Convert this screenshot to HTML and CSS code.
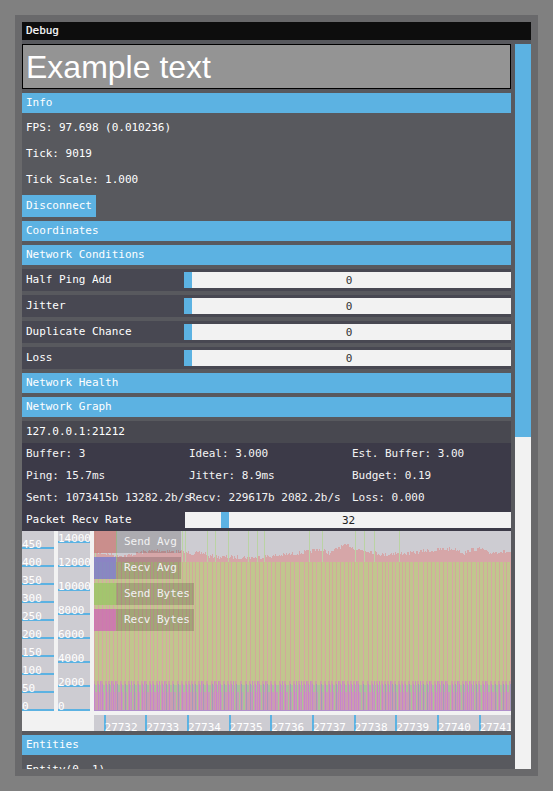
FILE: index.html
```html
<!DOCTYPE html>
<html lang="en">
<head>
<meta charset="utf-8">
<title>Debug</title>
<link rel="stylesheet" href="styles.css">
</head>
<body>
<main class="window">
  <header class="title">Debug</header>
  <div class="body">
    <div class="content">
      <div class="textbox">Example text</div>
      <div class="section">Info</div>
      <div class="line">FPS: 97.698 (0.010236)</div>
      <div class="line">Tick: 9019</div>
      <div class="line">Tick Scale: 1.000</div>
      <button class="button">Disconnect</button>
      <div class="section">Coordinates</div>
      <div class="section">Network Conditions</div>
      <div class="field"><span class="name">Half Ping Add</span><div class="slider"><i class="thumb"></i><span class="value">0</span></div></div>
      <div class="field"><span class="name">Jitter</span><div class="slider"><i class="thumb"></i><span class="value">0</span></div></div>
      <div class="field"><span class="name">Duplicate Chance</span><div class="slider"><i class="thumb"></i><span class="value">0</span></div></div>
      <div class="field"><span class="name">Loss</span><div class="slider"><i class="thumb"></i><span class="value">0</span></div></div>
      <div class="section">Network Health</div>
      <div class="section">Network Graph</div>
      <div class="connection">
        <div class="address">127.0.0.1:21212</div>
        <div class="stats">
          <span>Buffer: 3</span><span>Ideal: 3.000</span><span>Est. Buffer: 3.00</span>
          <span>Ping: 15.7ms</span><span>Jitter: 8.9ms</span><span>Budget: 0.19</span>
          <span>Sent: 1073415b 13282.2b/s</span><span>Recv: 229617b 2082.2b/s</span><span>Loss: 0.000</span>
        </div>
        <div class="field rate"><span class="name">Packet Recv Rate</span><div class="slider"><i class="thumb"></i><span class="value">32</span></div></div>
        <div class="graph">
          <div class="axis axis-packets">
            <span>450</span><span>400</span><span>350</span><span>300</span><span>250</span><span>200</span><span>150</span><span>100</span><span>50</span><span>0</span>
          </div>
          <div class="axis axis-bytes">
            <span>14000</span><span>12000</span><span>10000</span><span>8000</span><span>6000</span><span>4000</span><span>2000</span><span>0</span>
          </div>
          <div class="plot">
            <svg id="chart" width="417" height="180" viewBox="0 0 417 180" shape-rendering="crispEdges"></svg>
            <div class="legend">
              <div class="key"><i class="swatch red"></i><span>Send Avg</span></div>
              <div class="key"><i class="swatch blue"></i><span>Recv Avg</span></div>
              <div class="key"><i class="swatch green"></i><span>Send Bytes</span></div>
              <div class="key"><i class="swatch pink"></i><span>Recv Bytes</span></div>
            </div>
          </div>
          <div class="axis-time">
            <span>27732</span><span>27733</span><span>27734</span><span>27735</span><span>27736</span><span>27737</span><span>27738</span><span>27739</span><span>27740</span><span>27741</span>
          </div>
        </div>
      </div>
      <div class="section">Entities</div>
      <div class="line">Entity(0, 1)</div>
    </div>
    <div class="scrollbar"><div class="grip"></div></div>
  </div>
</main>
<script src="chart.js"></script>
</body>
</html>
```
FILE: styles.css
```css
* { box-sizing: border-box; }

body {
  margin: 0;
  height: 791px;
  padding: 15px;
  overflow: hidden;
  background: #808080;
  color: #fff;
  font: 11px/20px "DejaVu Sans Mono", "Liberation Mono", monospace;
  letter-spacing: -0.03px;
}

.window {
  display: flex;
  flex-direction: column;
  gap: 4px;
  width: 523px;
  height: 761px;
  border: 7px solid #69696b;
  background: #58595e;
}

.title {
  flex: none;
  height: 18px;
  padding-left: 4px;
  background: #0d0d0d;
  line-height: 18px;
  -webkit-text-stroke: 0.2px #fff;
}

.body {
  display: flex;
  flex: 1;
  gap: 4px;
  min-height: 0;
}

.content {
  display: flex;
  flex-direction: column;
  gap: 4px;
  width: 489px;
  overflow: hidden;
}

.content > * { flex: none; }

.textbox {
  height: 45px;
  padding-left: 3px;
  border: 1px solid #000;
  background: #949494;
  font: 32px/45px "Liberation Sans", Arial, sans-serif;
  letter-spacing: 0;
}

.section {
  height: 20px;
  padding-left: 4px;
  background: #5cb2e2;
  line-height: 19px;
}

.line, .address {
  height: 22px;
  padding-left: 4px;
  line-height: 21px;
}

.button {
  align-self: flex-start;
  width: 74px;
  height: 22px;
  padding: 0 0 1px 4px;
  border: 0;
  background: #5cb2e2;
  color: #fff;
  font: inherit;
  letter-spacing: inherit;
  line-height: 20px;
  text-align: left;
}

.field {
  display: flex;
  height: 22px;
  padding: 3px 0;
  background: #484852;
}

.name {
  width: 162px;
  padding-left: 4px;
  line-height: 15px;
}

.slider {
  position: relative;
  flex: 1;
  height: 16px;
  background: #f2f2f2;
  color: #333;
  text-align: center;
}

.thumb {
  position: absolute;
  left: 0;
  top: 0;
  width: 8px;
  height: 16px;
  background: #5cb2e2;
}

.value {
  display: block;
  padding-left: 3px;
  line-height: 17px;
}

.rate { background: transparent; }
.rate .name { width: 163px; line-height: 15px; }
.rate .thumb { left: 36px; }
.rate .value { padding-left: 1px; color: #222; }

.connection { background: #3c3a48; }
.address { background: #484850; }

.stats {
  display: grid;
  grid-template-columns: repeat(3, 163px);
  grid-auto-rows: 22px;
  line-height: 21px;
  white-space: nowrap;
}

.stats span { padding-left: 4px; color: #f4f4f4; }

.graph {
  display: grid;
  grid-template-columns: 32px 32px 417px;
  grid-template-rows: 180px 16px;
  gap: 4px;
  height: 200px;
  background: #f2f2f2;
}

.axis {
  display: flex;
  flex-direction: column;
  justify-content: flex-end;
  background: #cdccd2;
}

.axis span {
  flex: none;
  border-bottom: 2px solid #5cb2e2;
  height: 18px;
  line-height: 27px;
}

/* The top interval is only partly inside the plotted range. */
.axis-bytes span { height: 24px; line-height: 39px; }
.axis-bytes span:first-child { height: 12px; line-height: 15px; }

.plot {
  position: relative;
  overflow: hidden;
  background: #cdccd2;
}

.plot svg { display: block; }

.legend {
  position: absolute;
  left: 0;
  top: 0;
  display: flex;
  flex-direction: column;
  align-items: flex-start;
  gap: 4px;
}

.key { display: flex; height: 22px; }
.key span {
  padding: 0 4px 0 8px;
  background: rgba(0, 0, 0, 0.16);
  color: #f2f2f2;
  line-height: 21px;
}

.swatch { width: 22px; }
.red { background: rgba(201, 126, 122, 0.8); }
.blue { background: rgba(126, 126, 201, 0.85); }
.green { background: rgba(158, 196, 104, 0.85); }
.pink { background: rgba(205, 108, 180, 0.8); }

.axis-time {
  grid-column: 3;
  display: grid;
  grid-template-columns: repeat(10, 41.67px);
  height: 16px;
  padding-left: 9.6px;
  overflow: hidden;
  background: #cdccd2;
}

.axis-time span {
  height: 16px;
  border-left: 2px solid #5cb2e2;
  line-height: 25px;
  text-indent: -1px;
}

.scrollbar {
  width: 16px;
  background: #f2f2f2;
}

.grip {
  height: 393px;
  background: #5cb2e2;
}
```
FILE: chart.js
```js
const chart = document.getElementById("chart");

function bar(x, y, height, fill, width = 1) {
  const rect = document.createElementNS("http://www.w3.org/2000/svg", "rect");
  rect.setAttribute("x", x);
  rect.setAttribute("y", y);
  rect.setAttribute("width", width);
  rect.setAttribute("height", height);
  rect.setAttribute("fill", fill);
  chart.appendChild(rect);
}

// Small repeatable generator for the per-packet jitter.
let seed = 7;
function rand() {
  seed = (seed * 16807) % 2147483647;
  return seed / 2147483647;
}

// Average send rate: [x, top] knots.
const average = [
  [0, 21], [22, 24], [36, 24], [46, 21], [66, 19], [76, 20], [100, 22],
  [112, 22], [114, 25], [130, 26], [166, 26], [186, 24], [206, 22],
  [224, 18], [236, 22], [244, 16], [254, 14], [262, 18], [276, 20],
  [290, 24], [298, 22], [316, 22], [328, 20], [342, 19], [346, 18],
  [362, 18], [370, 22], [378, 18], [388, 18], [394, 22], [406, 20], [417, 21]
];
const spikes = [1, 22, 88, 91, 113, 121, 134, 154, 163, 170, 215, 228, 261, 270, 280, 305];

let k = 0;
for (let x = 0; x < 417; x++) {
  while (x > average[k + 1][0]) k++;
  const [x0, y0] = average[k];
  const [x1, y1] = average[k + 1];
  const top = Math.round(y0 + (y1 - y0) * (x - x0) / (x1 - x0) + (rand() - 0.45) * 4);
  bar(x, top, 180 - top, "#d6a6a8");
}

bar(0, 31, 149, "#c1c68e", 417);
bar(0, 154, 26, "#a7c499", 417);
spikes.forEach(x => bar(x, 0, 31, "#bad3a4"));

// Gaps between sent packets, with received bytes stacked underneath.
let x = 0;
while (x < 417) {
  bar(x, 31, 119, rand() < 0.5 ? "#d7a7a3" : "#d2a99a");
  bar(x - 1, 150, 30, "#cc9eaa", 2);
  bar(x + 1, 161, 19, "#c69eb4", rand() < 0.5 ? 2 : 1);
  bar(x, 153, 27, rand() < 0.6 ? "#c982cc" : "#a597bd");
  if (rand() < 0.3) bar(x + 2, 150, 30, "#c98cc4");
  x += rand() < 0.25 ? 5 : (rand() < 0.2 ? 3 : 4);
}
bar(0, 179, 1, "#b08fcb", 417);
```
